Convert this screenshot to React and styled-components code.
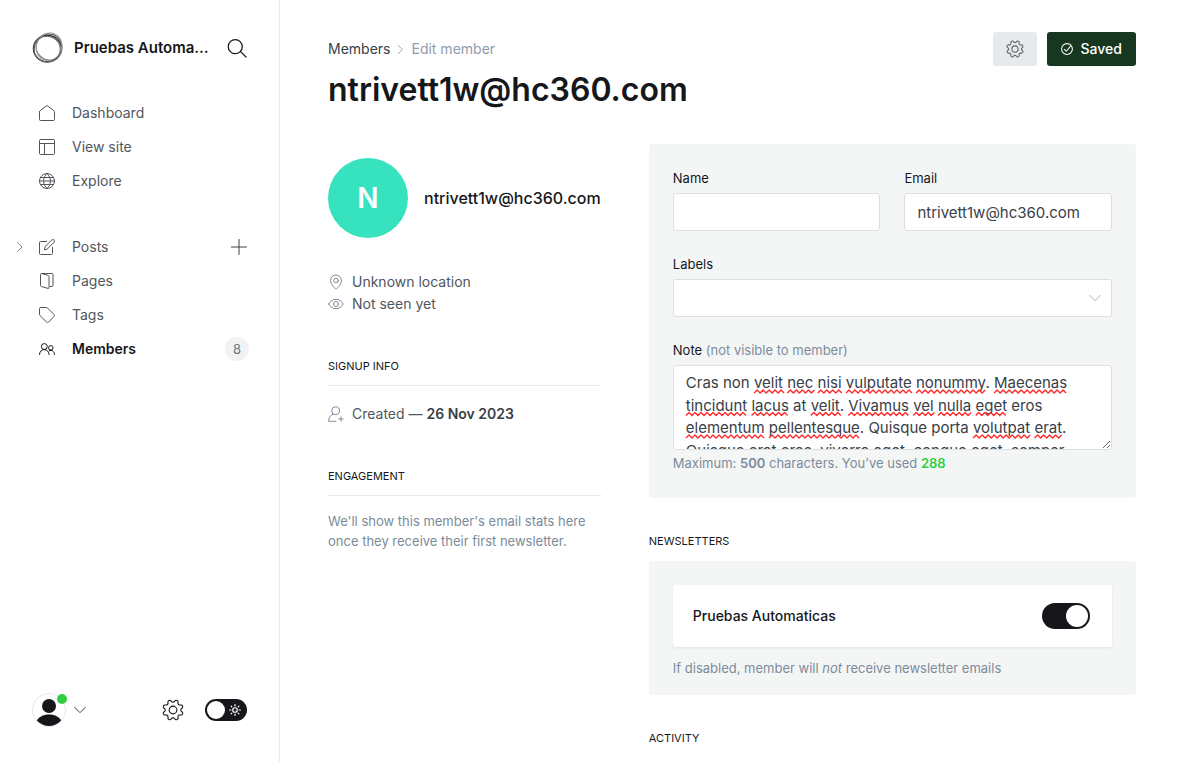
import React, { useLayoutEffect, useRef, useState } from "react";
import styled, { createGlobalStyle, css } from "styled-components";

const c = {
  black: "#15171a",
  dark: "#394047",
  nav: "#50565d",
  mid: "#7c8b9a",
  light: "#aab4be",
  line: "#e6e9eb",
  field: "#dcdfe0",
  panel: "#f4f6f6",
  green: "#30cf43",
};

const GlobalStyle = createGlobalStyle`
  *, *::before, *::after { box-sizing: border-box; }
  body {
    margin: 0;
    background: #fff;
    color: ${c.black};
    font-family: Inter, "Liberation Sans", sans-serif;
    font-size: 14px;
    line-height: 20px;
  }
  a { color: inherit; text-decoration: none; }
  button, input, select, textarea { font: inherit; color: inherit; }
  h1, h2, h3, p, ul { margin: 0; padding: 0; font-weight: inherit; }
  ul { list-style: none; }
`;

/* ---------- layout ---------- */

const Shell = styled.div`
  display: grid;
  grid-template-columns: 280px minmax(0, 1fr);
  height: 100vh;
  overflow: hidden;
`;

const Sidebar = styled.nav`
  display: flex;
  flex-direction: column;
  border-right: 1px solid ${c.line};
  padding: 32px 32px 35px;
`;

const Main = styled.main`
  padding: 32px 48px;
  overflow: hidden;
`;

const IconButton = styled.button`
  display: inline-flex;
  align-items: center;
  justify-content: center;
  border: 0;
  padding: 0;
  background: none;
  cursor: pointer;
  color: ${(p) => p.$color || c.black};
`;

const Svg = styled.svg`
  display: block;
  flex: none;
  width: ${(p) => p.$size || 16}px;
  height: ${(p) => p.$size || 16}px;
  fill: none;
  stroke: currentColor;
  stroke-width: ${(p) => p.$weight || 1};
  stroke-linecap: round;
  stroke-linejoin: round;
`;

/* ---------- sidebar ---------- */

const Brand = styled.div`
  display: flex;
  align-items: center;
  gap: 10px;
  height: 32px;
`;

const BrandName = styled.span`
  flex: 1;
  min-width: 0;
  max-width: 136px;
  margin-right: auto;
  overflow: hidden;
  white-space: nowrap;
  text-overflow: ellipsis;
  font-size: 15px;
  font-weight: 600;
`;

const NavList = styled.ul`
  margin-top: 32px;
`;

const NavItem = styled.li`
  position: relative;
  display: flex;
  align-items: center;
  height: 34px;
`;

const NavLink = styled.a`
  flex: 1;
  display: flex;
  align-items: center;
  gap: 17px;
  padding-left: 7px;
  color: ${(p) => (p.$active ? c.black : c.nav)};
  font-weight: ${(p) => (p.$active ? 600 : 400)};
`;

const Expander = styled(IconButton)`
  position: absolute;
  left: -18px;
`;

const Count = styled.span`
  min-width: 24px;
  margin-right: -2px;
  border-radius: 12px;
  background: #f0f2f4;
  color: #6b7885;
  font-size: 13px;
  line-height: 24px;
  text-align: center;
`;

const SidebarFooter = styled.div`
  display: flex;
  align-items: center;
  height: 34px;
  margin-top: auto;
`;

const UserButton = styled(IconButton)`
  gap: 8px;
  margin-right: auto;
`;

const UserPicture = styled.span`
  position: relative;
  display: block;
  width: 34px;
  height: 34px;
`;

const OnlineDot = styled.span`
  position: absolute;
  top: 1px;
  right: -1px;
  width: 10px;
  height: 10px;
  border-radius: 50%;
  background: ${c.green};
`;

const ThemeSwitch = styled.label`
  position: relative;
  display: flex;
  margin-left: 21px;
`;

const SunBadge = styled.span`
  position: absolute;
  right: 6px;
  top: 5px;
  color: #fff;
  pointer-events: none;
`;

const Switch = styled.input`
  appearance: none;
  display: flex;
  align-items: center;
  width: ${(p) => p.$w}px;
  height: ${(p) => p.$h}px;
  margin: 0;
  padding: 2px;
  border-radius: 13px;
  background: ${c.black};
  cursor: pointer;
  &::before {
    content: "";
    width: ${(p) => p.$h - 4}px;
    height: ${(p) => p.$h - 4}px;
    border-radius: 50%;
    background: #fff;
  }
  &:checked::before { margin-left: auto; }
`;

/* ---------- header ---------- */

const Header = styled.header`
  display: flex;
  align-items: flex-start;
  justify-content: space-between;
`;

const Crumbs = styled.div`
  display: flex;
  align-items: center;
  gap: 5px;
  height: 34px;
  color: ${c.dark};
  svg { color: #8e9cac; }
`;

const CrumbCurrent = styled.span`
  color: #8e9cac;
`;

const Title = styled.h1`
  font-size: 32px;
  font-weight: 600;
  line-height: 48px;
`;

const Actions = styled.div`
  display: flex;
  gap: 10px;
`;

const GearButton = styled(IconButton)`
  width: 44px;
  height: 34px;
  border-radius: 3px;
  background: #e6eaed;
`;

const SaveButton = styled(IconButton)`
  gap: 8px;
  height: 34px;
  padding: 0 14px;
  border-radius: 3px;
  background: #183720;
  font-weight: 500;
`;

/* ---------- member details ---------- */

const Columns = styled.div`
  display: grid;
  grid-template-columns: minmax(0, 14fr) minmax(0, 25fr);
  gap: 48px;
  margin-top: 30px;
`;

const Details = styled.section`
  padding-top: 14px;
`;

const Profile = styled.div`
  display: flex;
  align-items: center;
  gap: 16px;
  margin-bottom: 31px;
`;

const Initial = styled.span`
  display: flex;
  flex: none;
  align-items: center;
  justify-content: center;
  width: 80px;
  height: 80px;
  border-radius: 50%;
  background: #37e3bf;
  color: #fff;
  font-size: 28px;
  font-weight: 600;
`;

const ProfileName = styled.h3`
  font-size: 16px;
  font-weight: 500;
`;

const Facts = styled.div`
  padding: 2px 0;
`;

const Fact = styled.p`
  display: flex;
  align-items: center;
  gap: 8px;
  color: ${c.nav};
  line-height: 22px;
  svg { color: ${c.mid}; }
  strong { color: ${c.dark}; font-weight: 600; }
`;

const headingText = css`
  font-size: 11px;
  line-height: 20px;
  text-transform: uppercase;
`;

const SectionTitle = styled.h2`
  ${headingText}
  margin: 39px 0 15px;
  padding-bottom: 9px;
  border-bottom: 1px solid ${c.line};
`;

const Muted = styled.p`
  color: ${c.mid};
  font-size: 13px;
  line-height: 20px;
`;

/* ---------- form ---------- */

const Panel = styled.section`
  padding: 24px 24px ${(p) => p.$bottom || 24}px;
  border-radius: 3px;
  background: ${c.panel};
`;

const PanelTitle = styled.h2`
  ${headingText}
  margin: 33px 0 10px;
`;

const FieldRow = styled.div`
  display: grid;
  grid-template-columns: 1fr 1fr;
  gap: 24px;
`;

const Field = styled.div`
  display: flex;
  flex-direction: column;
  margin-bottom: ${(p) => (p.$last ? 0 : 23)}px;
`;

const Label = styled.label`
  margin-bottom: 5px;
  font-size: 13px;
  line-height: 20px;
  span { color: ${c.mid}; }
`;

const box = css`
  width: 100%;
  min-width: 0;
  border: 1px solid ${c.field};
  border-radius: 3px;
  background: #fff;
  color: ${c.dark};
  font-size: 15px;
  outline: 0;
`;

const TextInput = styled.input`
  ${box}
  height: 38px;
  padding: 0 12px;
`;

const SelectWrap = styled.div`
  position: relative;
  svg {
    position: absolute;
    right: 11px;
    top: 13px;
    color: ${c.light};
    pointer-events: none;
  }
`;

const Select = styled.select`
  ${box}
  display: block;
  appearance: none;
  height: 38px;
  padding: 0 12px;
`;

const NoteWrap = styled.div`
  position: relative;
  margin-bottom: 3px;
`;

const NoteInput = styled.textarea`
  ${box}
  display: block;
  height: 85px;
  padding: 6px 12px;
  line-height: 1.5;
  overflow: hidden;
`;

const SpellMarks = styled.svg`
  position: absolute;
  inset: 0;
  width: 100%;
  height: 100%;
  fill: none;
  stroke: #ff2a2a;
  stroke-width: 1.4;
  stroke-linejoin: round;
  pointer-events: none;
`;

const Hint = styled(Muted)`
  strong { font-weight: 600; }
`;

const Used = styled.strong`
  color: ${c.green};
`;

const NewsletterCard = styled.div`
  display: flex;
  align-items: center;
  justify-content: space-between;
  height: 62px;
  margin-bottom: 11px;
  padding: 0 22px 0 20px;
  border-radius: 3px;
  background: #fff;
  box-shadow: 0 1px 3px rgba(0, 0, 0, 0.08);
  font-weight: 500;
`;

/* ---------- icons ---------- */

const gearPath = (() => {
  const pts = [];
  for (let i = 0; i < 128; i++) {
    const a = (i / 128) * Math.PI * 2;
    const w = Math.cos(8 * a);
    const r = 9.9 - 1.4 * Math.sign(w) * Math.pow(Math.abs(w), 0.6);
    pts.push(`${(12 + r * Math.cos(a)).toFixed(2)} ${(12 + r * Math.sin(a)).toFixed(2)}`);
  }
  return `M${pts.join("L")}Z`;
})();

const Gear = ({ size, weight }) => (
  <Svg viewBox="0 0 24 24" $size={size} $weight={weight} aria-hidden="true">
    <path d={gearPath} />
    <circle cx="12" cy="12" r="4.2" />
  </Svg>
);

const Chevron = ({ dir = "down", size = 12 }) => (
  <Svg viewBox="0 0 12 12" $size={size} aria-hidden="true">
    <path d={dir === "down" ? "M0.7 3.3 6 8.7l5.3-5.4" : "M3.5 1.5 8 6l-4.5 4.5"} />
  </Svg>
);

const Logo = () => (
  <Svg viewBox="0 0 32 32" $size={32} aria-hidden="true">
    <ellipse cx="15.4" cy="16.6" rx="14" ry="13.3" stroke="#2a2a2a" strokeWidth="1.3" />
    <ellipse cx="16" cy="16" rx="14.6" ry="13.2" stroke="#555" transform="rotate(-50 16 16)" />
    <ellipse cx="17" cy="15" rx="13.6" ry="12.600" stroke="#777" transform="rotate(50 17 15)" />
    <ellipse cx="17" cy="14.800" rx="12.600" ry="14" stroke="#999" transform="rotate(25 17 15)" />
    <ellipse cx="15" cy="17" rx="13.200" ry="12.800" stroke="#666" transform="rotate(10 15 17)" />
  </Svg>
);

const icons = {
  home: <path d="M.5 6.600V14.500a1 1 0 0 0 1 1h13a1 1 0 0 0 1-1V6.600a1 1 0 0 0-.4-.8L8 .5.9 5.800a1 1 0 0 0-.4.8Z" />,
  site: <path d="M1.500.5h13a1 1 0 0 1 1 1v13a1 1 0 0 1-1 1h-13a1 1 0 0 1-1-1v-13a1 1 0 0 1 1-1ZM.5 4.500h15M5.500 4.500v11" />,
  globe: <path d="M15.500 8A7.500 7.500 0 1 1 .5 8a7.500 7.500 0 0 1 15 0ZM8 .5c-4.700 4.400-4.700 10.600 0 15M8 .5c4.700 4.400 4.700 10.600 0 15M1.500 4.500h13M.5 8h15M1.500 11.500h13" />,
  posts: <path d="M13.500 8.500v6a1 1 0 0 1-1 1h-11a1 1 0 0 1-1-1v-11a1 1 0 0 1 1-1h6M5.500 10.500l.6-2.900L12.900.9a1.300 1.300 0 0 1 1.900 0l.3.3a1.300 1.300 0 0 1 0 1.900L8.400 9.900Z" />,
  pages: <path d="M2.500.5h10.500a1 1 0 0 1 1 1v11a1 1 0 0 1-1 1h-2M2.500.5l6.700 1.900a1.100 1.100 0 0 1 .8 1v11.200a.8.8 0 0 1-1 .8l-6.700-1.900a1.100 1.100 0 0 1-.8-1V1.500a1 1 0 0 1 1-1Z" />,
  tag: <path d="M1.500.5h5.800a2 2 0 0 1 1.400.6l6.400 6.500a1.300 1.300 0 0 1 0 1.900l-5.600 5.600a1.300 1.300 0 0 1-1.900 0L1.100 8.700a2 2 0 0 1-.6-1.400V1.500a1 1 0 0 1 1-1Z" />,
  members: <path d="M5.300 8.600a3 3 0 1 0 0-6 3 3 0 0 0 0 6ZM.5 13.500c0-2.800 2-4.900 4.800-4.900s4.700 2.100 4.700 4.900M11.800 9.200a2.300 2.300 0 1 0 0-4.600 2.300 2.300 0 0 0 0 4.600ZM10.300 9.700c2.700-1.200 5.200.7 5.200 3.800" />,
  search: <path d="M12.200 6.900a5.600 5.600 0 1 1-11.200 0 5.600 5.600 0 0 1 11.200 0ZM10.900 10.900l4.300 4.300" />,
  plus: <path d="M8 .5v15M.5 8h15" />,
  pin: <path d="M13.500 6.500c0 3.500-3.600 7.400-4.900 8.200a.9.9 0 0 1-1.200 0C6.100 13.900 2.500 10 2.500 6.500a5.500 5.500 0 0 1 11 0ZM10.300 6.500a2.300 2.300 0 1 1-4.600 0 2.300 2.300 0 0 1 4.600 0Z" />,
  eye: <path d="M.7 8C2.300 5.300 5 3.300 8 3.300S13.700 5.300 15.300 8c-1.600 2.700-4.300 4.700-7.300 4.700S2.300 10.700.7 8ZM10.500 8a2.500 2.500 0 1 1-5 0 2.500 2.500 0 0 1 5 0Z" />,
  userAdd: <path d="M11.500 4.700a3.900 3.900 0 1 1-7.800 0 3.900 3.900 0 0 1 7.800 0ZM5.400 8C2.500 9.200.6 11.700.6 15.300H8M13 10.800v4.400M10.800 13h4.400" />,
  check: <path d="M15.200 8A7.200 7.200 0 1 1 .8 8a7.200 7.200 0 0 1 14.400 0ZM4.500 8.500 7 11l5.500-6.500" />,
  sun: <path d="M11 8a3 3 0 1 1-6 0 3 3 0 0 1 6 0ZM8 .8v1.700M8 13.500v1.700M.8 8h1.700M13.500 8h1.700M2.800 2.800l1 1M12.200 12.200l1 1M13.200 2.800l-1 1M3.800 12.200l-1 1" />,
};

const Icon = ({ name, size, weight }) => (
  <Svg viewBox="0 0 16 16" $size={size} $weight={weight} aria-hidden="true">
    {icons[name]}
  </Svg>
);

const UserAvatar = () => (
  <Svg viewBox="0 0 34 34" $size={34} aria-hidden="true">
    <clipPath id="user-clip"><circle cx="17" cy="17" r="16" /></clipPath>
    <circle cx="17" cy="17" r="16.5" stroke="#e6e9eb" />
    <g clipPath="url(#user-clip)" fill="#15171a" stroke="none">
      <circle cx="17" cy="13" r="7" />
      <path d="M4 29c2-5 7-7.500 13-7.500S28 24 30 29v5H4Z" />
    </g>
  </Svg>
);

/* ---------- data ---------- */

const primaryNav = [
  { label: "Dashboard", icon: "home" },
  { label: "View site", icon: "site" },
  { label: "Explore", icon: "globe" },
];

const contentNav = [
  { label: "Posts", icon: "posts", expandable: true },
  { label: "Pages", icon: "pages" },
  { label: "Tags", icon: "tag" },
  { label: "Members", icon: "members", active: true, count: 8 },
];

const noteText =
  "Cras non velit nec nisi vulputate nonummy. Maecenas tincidunt lacus at velit. Vivamus vel nulla eget eros elementum pellentesque. Quisque porta volutpat erat. Quisque erat eros, viverra eget, congue eget, semper rutrum, nulla. Nunc purus. Phasellus in felis. Donec semper sapien a libero. Nam dui.";

const knownWords = new Set(["Cras", "non", "at", "eros", "Quisque", "porta", "in", "a", "dui", "Nam"]);

/* ---------- spelling marks ---------- */

const LINE = 22.5;

const zigzag = (x, y, width) => {
  let d = `M${x.toFixed(1)} ${y + 3}`;
  for (let dx = 3, up = true; dx <= width + 1; dx += 3, up = !up) {
    d += `L${(x + dx).toFixed(1)} ${up ? y : y + 3}`;
  }
  return d;
};

/* Follows the text area's own word wrapping to place a mark under each unknown word. */
const findMarks = (area) => {
  const style = getComputedStyle(area);
  const padX = parseFloat(style.paddingLeft);
  const ctx = document.createElement("canvas").getContext("2d");
  ctx.font = `${style.fontSize} ${style.fontFamily}`;
  const limit = area.clientWidth - 2 * padX;
  const visibleLines = Math.floor((area.clientHeight - 6) / LINE);
  const marks = [];
  let text = "";
  let row = 0;
  for (const token of area.value.split(" ")) {
    if (text && ctx.measureText(text + token).width > limit) {
      text = "";
      row += 1;
    }
    if (row >= visibleLines) break;
    const word = token.replace(/[^A-Za-z]/g, "");
    if (word && !knownWords.has(word)) {
      marks.push(zigzag(1 + padX + ctx.measureText(text).width, 25 + row * LINE, ctx.measureText(word).width));
    }
    text += `${token} `;
  }
  return marks;
};

const NoteField = () => {
  const area = useRef(null);
  const [note, setNote] = useState(noteText);
  const [marks, setMarks] = useState([]);

  useLayoutEffect(() => {
    const update = () => setMarks(findMarks(area.current));
    update();
    const observer = new ResizeObserver(update);
    observer.observe(area.current);
    return () => observer.disconnect();
  }, [note]);

  return (
    <NoteWrap>
      <NoteInput id="note" ref={area} spellCheck={false} value={note} onChange={(e) => setNote(e.target.value)} />
      <SpellMarks aria-hidden="true">
        {marks.map((d) => <path key={d} d={d} />)}
      </SpellMarks>
    </NoteWrap>
  );
};

const Nav = ({ items }) => (
  <NavList>
    {items.map((item) => (
      <NavItem key={item.label}>
        {item.expandable && (
          <Expander $color={c.mid} aria-label="Expand posts"><Chevron dir="right" /></Expander>
        )}
        <NavLink href="#" $active={item.active}>
          <Icon name={item.icon} />
          {item.label}
        </NavLink>
        {item.expandable && (
          <IconButton $color={c.dark} aria-label="New post"><Icon name="plus" /></IconButton>
        )}
        {item.count && <Count>{item.count}</Count>}
      </NavItem>
    ))}
  </NavList>
);

export default function App() {
  const [name, setName] = useState("");
  const [email, setEmail] = useState("ntrivett1w@hc360.com");

  return (
    <>
      <GlobalStyle />
      <Shell>
        <Sidebar>
          <Brand>
            <Logo />
            <BrandName>Pruebas Automaticas</BrandName>
            <IconButton aria-label="Search"><Icon name="search" size={20} /></IconButton>
          </Brand>
          <Nav items={primaryNav} />
          <Nav items={contentNav} />
          <SidebarFooter>
            <UserButton $color={c.dark} aria-label="Account">
              <UserPicture><UserAvatar /><OnlineDot /></UserPicture>
              <Chevron />
            </UserButton>
            <IconButton aria-label="Settings"><Gear size={22} weight={1.2} /></IconButton>
            <ThemeSwitch>
              <Switch type="checkbox" $w={42} $h={22} aria-label="Night shift" />
              <SunBadge><Icon name="sun" size={12} weight={1.6} /></SunBadge>
            </ThemeSwitch>
          </SidebarFooter>
        </Sidebar>

        <Main>
          <Header>
            <div>
              <Crumbs>
                <a href="#">Members</a>
                <Chevron dir="right" size={11} />
                <CrumbCurrent>Edit member</CrumbCurrent>
              </Crumbs>
              <Title>ntrivett1w@hc360.com</Title>
            </div>
            <Actions>
              <GearButton $color="#5b6269" aria-label="Member actions"><Gear size={18} weight={1.4} /></GearButton>
              <SaveButton $color="#fff"><Icon name="check" size={12} weight={1.4} />Saved</SaveButton>
            </Actions>
          </Header>

          <Columns>
            <Details>
              <Profile>
                <Initial>N</Initial>
                <ProfileName>ntrivett1w@hc360.com</ProfileName>
              </Profile>
              <Facts>
                <Fact><Icon name="pin" />Unknown location</Fact>
                <Fact><Icon name="eye" />Not seen yet</Fact>
              </Facts>
              <SectionTitle>Signup info</SectionTitle>
              <Facts>
                <Fact><Icon name="userAdd" /><span>Created — <strong>26 Nov 2023</strong></span></Fact>
              </Facts>
              <SectionTitle>Engagement</SectionTitle>
              <Muted>We'll show this member's email stats here once they receive their first newsletter.</Muted>
            </Details>

            <div>
              <Panel $bottom={25}>
                <FieldRow>
                  <Field>
                    <Label htmlFor="name">Name</Label>
                    <TextInput id="name" value={name} onChange={(e) => setName(e.target.value)} />
                  </Field>
                  <Field>
                    <Label htmlFor="email">Email</Label>
                    <TextInput id="email" value={email} onChange={(e) => setEmail(e.target.value)} />
                  </Field>
                </FieldRow>
                <Field>
                  <Label htmlFor="labels">Labels</Label>
                  <SelectWrap>
                    <Select id="labels"><option value="" /></Select>
                    <Chevron />
                  </SelectWrap>
                </Field>
                <Field $last>
                  <Label htmlFor="note">Note <span>(not visible to member)</span></Label>
                  <NoteField />
                  <Hint>Maximum: <strong>500</strong> characters. You’ve used <Used>288</Used></Hint>
                </Field>
              </Panel>

              <PanelTitle>Newsletters</PanelTitle>
              <Panel $bottom={17}>
                <NewsletterCard>
                  <label htmlFor="newsletter">Pruebas Automaticas</label>
                  <Switch id="newsletter" type="checkbox" defaultChecked $w={48} $h={26} />
                </NewsletterCard>
                <Muted>If disabled, member will <em>not</em> receive newsletter emails</Muted>
              </Panel>

              <PanelTitle>Activity</PanelTitle>
            </div>
          </Columns>
        </Main>
      </Shell>
    </>
  );
}
